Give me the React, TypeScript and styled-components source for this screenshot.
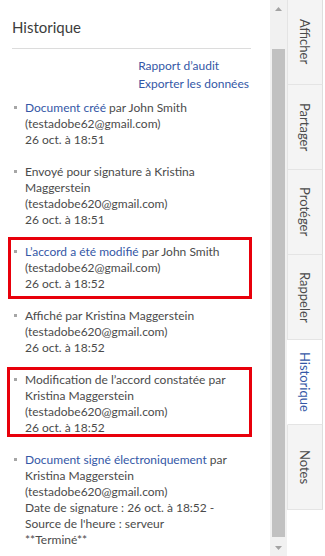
import React from 'react';
import styled, { createGlobalStyle } from 'styled-components';

const TEXT = '#4b4b4b';
const LINK = '#3457a6';
const MARK = '#e8000b';

const GlobalStyle = createGlobalStyle`
  html, body {
    margin: 0;
    padding: 0;
    background: #fff;
  }
  body {
    font-family: Lato, "Open Sans", sans-serif;
    color: ${TEXT};
  }
`;

type Entry = {
  link?: string;
  lead: string;
  lines: string[];
  mark?: { top: number; bottom: number; left: number };
};

const entries: Entry[] = [
  {
    link: 'Document créé',
    lead: ' par John Smith',
    lines: ['(testadobe62@gmail.com)', '26 oct. à 18:51'],
  },
  {
    lead: 'Envoyé pour signature à Kristina',
    lines: ['Maggerstein', '(testadobe620@gmail.com)', '26 oct. à 18:51'],
  },
  {
    link: 'L’accord a été modifié',
    lead: ' par John Smith',
    lines: ['(testadobe62@gmail.com)', '26 oct. à 18:52'],
    mark: { top: 7, bottom: 7, left: 4 },
  },
  {
    lead: 'Affiché par Kristina Maggerstein',
    lines: ['(testadobe620@gmail.com)', '26 oct. à 18:52'],
  },
  {
    lead: 'Modification de l’accord constatée par',
    lines: ['Kristina Maggerstein', '(testadobe620@gmail.com)', '26 oct. à 18:52'],
    mark: { top: 5, bottom: 1, left: 5 },
  },
  {
    link: 'Document signé électroniquement',
    lead: ' par',
    lines: [
      'Kristina Maggerstein',
      '(testadobe620@gmail.com)',
      'Date de signature : 26 oct. à 18:52 -',
      "Source de l'heure : serveur",
      '**Terminé**',
    ],
  },
];

const tabs = ['Afficher', 'Partager', 'Protéger', 'Rappeler', 'Historique', 'Notes'];

export default function App() {
  return (
    <>
      <GlobalStyle />
      <Page>
        <Panel>
          <Title>Historique</Title>
          <Rule />
          <Actions>
            <ActionLink href="#">Rapport d’audit</ActionLink>
            <ActionLink href="#">Exporter les données</ActionLink>
          </Actions>
          <EventList>
            {entries.map((e, i) => (
              <Event
                key={i}
                $marked={!!e.mark}
                $top={e.mark?.top ?? 0}
                $bottom={e.mark?.bottom ?? 0}
                $left={e.mark?.left ?? 0}
              >
                <Line>
                  {e.link && <EventLink href="#">{e.link}</EventLink>}
                  {e.lead}
                </Line>
                {e.lines.map((l, j) => (
                  <Line key={j}>{l}</Line>
                ))}
              </Event>
            ))}
          </EventList>
        </Panel>
        <ScrollBar>
          <ArrowButton>
            <svg width="7" height="4" viewBox="0 0 7 4">
              <path d="M0 4 L3.5 0 L7 4 Z" fill="#a3a3a3" />
            </svg>
          </ArrowButton>
          <Thumb />
          <ArrowButton>
            <svg width="7" height="4" viewBox="0 0 7 4">
              <path d="M0 0 L3.5 4 L7 0 Z" fill="#a3a3a3" />
            </svg>
          </ArrowButton>
        </ScrollBar>
        <TabRail>
          {tabs.map(t => (
            <Tab key={t} $active={t === 'Historique'}>
              {t}
            </Tab>
          ))}
        </TabRail>
      </Page>
    </>
  );
}

const Page = styled.div`
  display: flex;
  width: 325px;
  height: 556px;
  overflow: hidden;
  background: #fff;
`;

const Panel = styled.div`
  width: 270px;
  flex: none;
  box-sizing: border-box;
  padding: 17px 19px 0 12px;
  overflow: hidden;
`;

const Title = styled.h2`
  margin: 0;
  font-size: 15px;
  line-height: 20px;
  font-weight: 400;
  color: #3c3c3c;
`;

const Rule = styled.hr`
  margin: 11px 0 0 0;
  border: 0;
  border-top: 1px solid #dcdcdc;
  height: 0;
`;

const Actions = styled.div`
  display: flex;
  flex-direction: column;
  align-items: flex-start;
  margin: 8px 2px 0 auto;
  width: max-content;
`;

const ActionLink = styled.a`
  font-size: 12px;
  line-height: 18px;
  color: ${LINK};
  text-decoration: none;
`;

const EventList = styled.ul`
  list-style: none;
  margin: 7px 0 0 0;
  padding: 0;
  display: flex;
  flex-direction: column;
  gap: 16px;
`;

const Event = styled.li<{ $marked: boolean; $top: number; $bottom: number; $left: number }>`
  position: relative;
  padding-left: 13px;
  font-size: 12px;
  line-height: 16px;

  &::before {
    content: '';
    position: absolute;
    left: 2px;
    top: 6px;
    width: 3px;
    height: 3px;
    background: #a6a6a6;
  }

  &::after {
    content: '';
    display: ${p => (p.$marked ? 'block' : 'none')};
    position: absolute;
    top: -${p => p.$top}px;
    bottom: -${p => p.$bottom}px;
    left: -${p => p.$left}px;
    right: -1px;
    border: 3px solid ${MARK};
    pointer-events: none;
  }
`;

const Line = styled.span`
  display: block;
  white-space: nowrap;
`;

const EventLink = styled.a`
  color: ${LINK};
  text-decoration: none;
`;

const ScrollBar = styled.div`
  width: 17px;
  flex: none;
  display: flex;
  flex-direction: column;
  align-items: center;
  background: #f1f1f1;
`;

const ArrowButton = styled.div`
  height: 17px;
  width: 17px;
  display: flex;
  align-items: center;
  justify-content: center;
`;

const Thumb = styled.div`
  width: 13px;
  margin: 32px 0 2px;
  flex: 1;
  background: #c1c1c1;
`;

const TabRail = styled.div`
  width: 36px;
  flex: none;
  display: flex;
  flex-direction: column;
`;

const Tab = styled.div<{ $active: boolean }>`
  height: 85px;
  box-sizing: border-box;
  display: flex;
  align-items: center;
  justify-content: center;
  writing-mode: vertical-rl;
  font-size: 13px;
  color: ${p => (p.$active ? LINK : TEXT)};
  background: ${p => (p.$active ? '#fff' : '#f4f4f4')};
  border-right: 1px solid #dedede;
  border-bottom: 1px solid #e4e4e4;
  border-left: 1px solid ${p => (p.$active ? '#fff' : '#e4e4e4')};
`;
